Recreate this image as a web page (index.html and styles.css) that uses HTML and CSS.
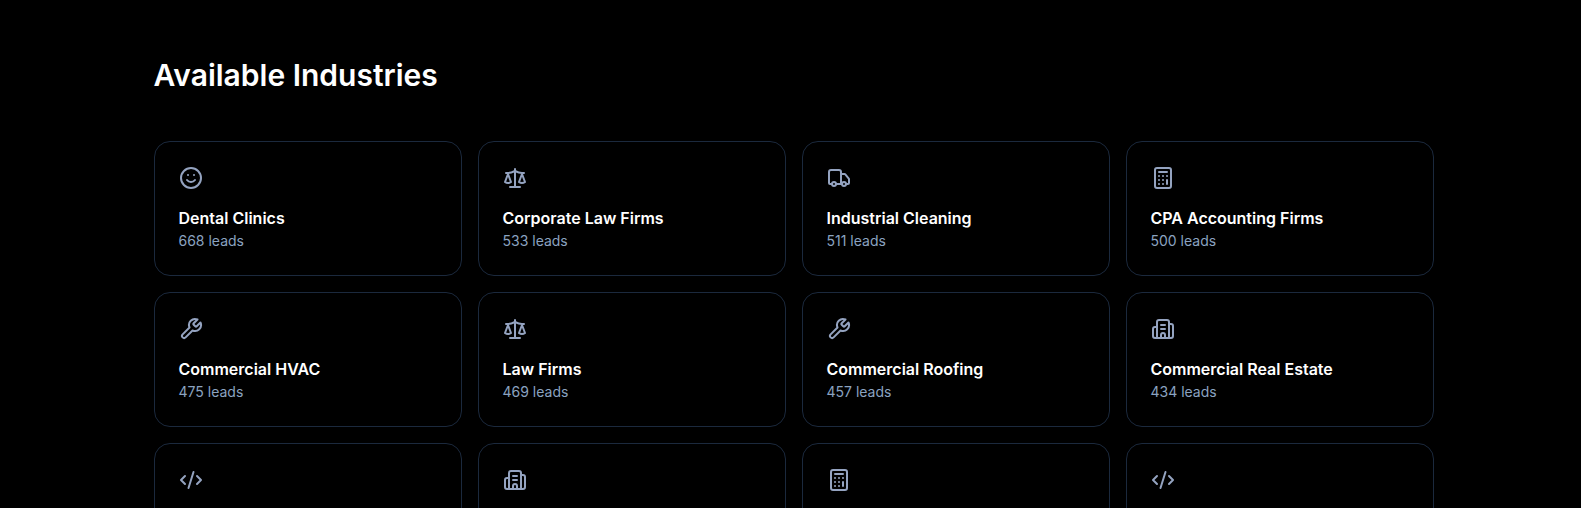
FILE: index.html
```html
<!DOCTYPE html>
<html lang="en">
<head>
    <meta charset="UTF-8" />
    <title>Available Industries</title>
    <link rel="stylesheet" href="styles.css">
</head>
<body>

<!-- shared icons -->
<svg class="icon-defs">
    <symbol id="smile" viewBox="0 0 24 24">
        <circle cx="12" cy="12" r="10" />
        <path d="M8 14s1.5 2 4 2 4-2 4-2" />
        <path d="M9 9h.01M15 9h.01" />
    </symbol>
    <symbol id="scale" viewBox="0 0 24 24">
        <path d="m16 16 3-8 3 8c-.87.65-1.92 1-3 1s-2.13-.35-3-1Z" />
        <path d="m2 16 3-8 3 8c-.87.65-1.92 1-3 1s-2.13-.35-3-1Z" />
        <path d="M7 21h10M12 3v18" />
        <path d="M3 7h2c2 0 5-1 7-2 2 1 5 2 7 2h2" />
    </symbol>
    <symbol id="truck" viewBox="0 0 24 24">
        <path d="M14 18V6a2 2 0 0 0-2-2H4a2 2 0 0 0-2 2v11a1 1 0 0 0 1 1h2" />
        <path d="M15 18H9" />
        <path d="M19 18h2a1 1 0 0 0 1-1v-3.65a1 1 0 0 0-.22-.624l-3.48-4.35A1 1 0 0 0 17.52 8H14" />
        <circle cx="17" cy="18" r="2" />
        <circle cx="7" cy="18" r="2" />
    </symbol>
    <symbol id="calculator" viewBox="0 0 24 24">
        <rect width="16" height="20" x="4" y="2" rx="2" />
        <path d="M8 6h8M16 14v4" />
        <path d="M16 10h.01M12 10h.01M8 10h.01M12 14h.01M8 14h.01M12 18h.01M8 18h.01" />
    </symbol>
    <symbol id="wrench" viewBox="0 0 24 24">
        <path d="M14.7 6.3a1 1 0 0 0 0 1.4l1.6 1.6a1 1 0 0 0 1.4 0l3.77-3.77a6 6 0 0 1-7.94 7.94l-6.91 6.91a2.12 2.12 0 0 1-3-3l6.91-6.91a6 6 0 0 1 7.94-7.94l-3.76 3.76z" />
    </symbol>
    <symbol id="building" viewBox="0 0 24 24">
        <path d="M10 12h4M10 8h4" />
        <path d="M14 21v-3a2 2 0 0 0-4 0v3" />
        <path d="M6 10H4a2 2 0 0 0-2 2v7a2 2 0 0 0 2 2h16a2 2 0 0 0 2-2V9a2 2 0 0 0-2-2h-2" />
        <path d="M6 21V5a2 2 0 0 1 2-2h8a2 2 0 0 1 2 2v16" />
    </symbol>
    <symbol id="code" viewBox="0 0 24 24">
        <path d="m18 16 4-4-4-4M6 8l-4 4 4 4M14.5 4l-5 16" />
    </symbol>
</svg>

<section class="industries">
    <h2>Available Industries</h2>
    <div class="grid">
        <div class="card">
            <svg class="icon"><use href="#smile" /></svg>
            <h3>Dental Clinics</h3>
            <p>668 leads</p>
        </div>
        <div class="card">
            <svg class="icon"><use href="#scale" /></svg>
            <h3>Corporate Law Firms</h3>
            <p>533 leads</p>
        </div>
        <div class="card">
            <svg class="icon"><use href="#truck" /></svg>
            <h3>Industrial Cleaning</h3>
            <p>511 leads</p>
        </div>
        <div class="card">
            <svg class="icon"><use href="#calculator" /></svg>
            <h3>CPA Accounting Firms</h3>
            <p>500 leads</p>
        </div>
        <div class="card">
            <svg class="icon"><use href="#wrench" /></svg>
            <h3>Commercial HVAC</h3>
            <p>475 leads</p>
        </div>
        <div class="card">
            <svg class="icon"><use href="#scale" /></svg>
            <h3>Law Firms</h3>
            <p>469 leads</p>
        </div>
        <div class="card">
            <svg class="icon"><use href="#wrench" /></svg>
            <h3>Commercial Roofing</h3>
            <p>457 leads</p>
        </div>
        <div class="card">
            <svg class="icon"><use href="#building" /></svg>
            <h3>Commercial Real Estate</h3>
            <p>434 leads</p>
        </div>
        <div class="card">
            <svg class="icon"><use href="#code" /></svg>
        </div>
        <div class="card">
            <svg class="icon"><use href="#building" /></svg>
        </div>
        <div class="card">
            <svg class="icon"><use href="#calculator" /></svg>
        </div>
        <div class="card">
            <svg class="icon"><use href="#code" /></svg>
        </div>
    </div>
</section>
</body>
</html>
```

FILE: styles.css
```css
* {
  box-sizing: border-box;
  margin: 0;
  padding: 0;
}
body {
  height: 100vh;
  overflow: hidden;
  background: #000;
  color: #fff;
  font-family: Inter, sans-serif;
}
.icon-defs {
  display: none;
}
.industries {
  width: 1433.5px;
  padding: 57px 0 0 153.5px;
}
h2 {
  margin-bottom: 48px;
  font-size: 30px;
  line-height: 36px;
  font-weight: 600;
}
.grid {
  display: grid;
  grid-template-columns: repeat(4, 1fr);
  grid-auto-rows: 135px;
  gap: 16px;
}
.card {
  padding: 24px;
  border: 1px solid #1b293d;
  border-radius: 16px;
}
.icon {
  display: block;
  width: 24px;
  height: 24px;
  margin-bottom: 16px;
  fill: none;
  stroke: #94a3c0;
  stroke-width: 2;
  stroke-linecap: round;
  stroke-linejoin: round;
}
h3 {
  font-size: 16px;
  line-height: 24px;
  font-weight: 600;
}
.card p {
  color: #8ba3c0;
  font-size: 14px;
  line-height: 21px;
}
```
